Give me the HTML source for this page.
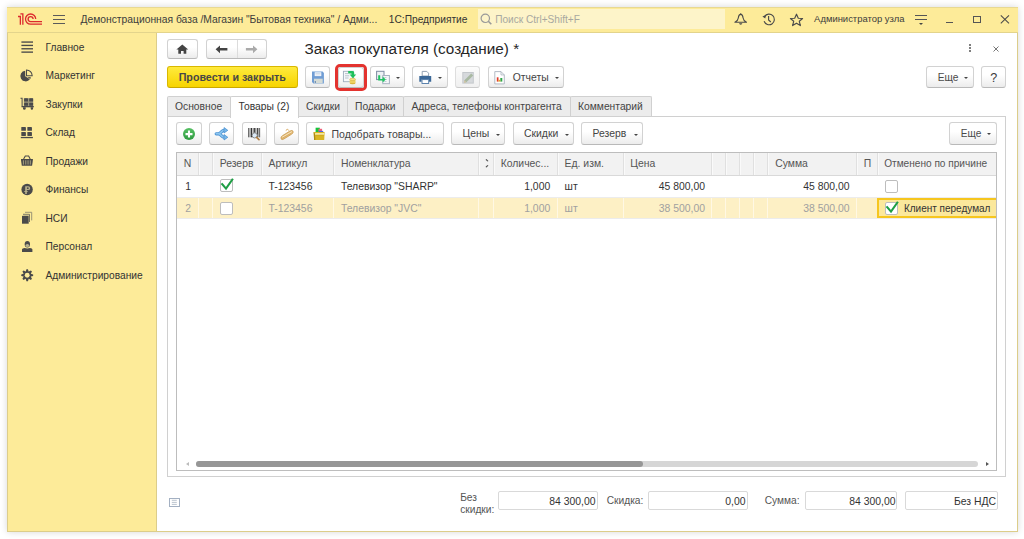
<!DOCTYPE html>
<html><head><meta charset="utf-8">
<style>
*{box-sizing:border-box;margin:0;padding:0}
html,body{width:1024px;height:539px;overflow:hidden;background:#fff;font-family:"Liberation Sans",sans-serif;color:#333}
#win{position:absolute;left:7px;top:7px;width:1011px;height:525px;background:#fff;box-shadow:0 0 7px rgba(0,0,0,0.16);border:1px solid #dccd8a;border-top:none}
#hdr{position:absolute;left:7px;top:7px;width:1011px;height:26px;background:#fdeb99;border-bottom:1px solid #e3d48c;border-top:1px solid #e8d992}
#side{position:absolute;left:7px;top:33px;width:150px;height:499px;background:#fdeb99;border-right:1px solid #dccd8a;border-left:1px solid #dccd8a;border-bottom:1px solid #dccd8a}
.t{position:absolute;white-space:nowrap;color:#333}
.btn{position:absolute;background:linear-gradient(#fff 40%,#ececec);border:1px solid #d2d2d2;border-bottom-color:#b9b9b9;border-radius:3px}
.dd{position:absolute;width:0;height:0;border-left:2px solid transparent;border-right:2px solid transparent;border-top:2px solid #444}
.tab{position:absolute;top:96px;height:20px;background:#ececec;border:1px solid #d0d0d0;border-bottom:none;border-radius:2px 2px 0 0}
.hl{position:absolute;height:1px}
.vl{position:absolute;width:1px}
.cb{position:absolute;width:13px;height:13px;background:#fff;border:1px solid #bdbdbd;border-radius:2px}
.inp{position:absolute;top:491px;height:19px;background:#fff;border:1px solid #d9d9d9;border-radius:2px}
svg{position:absolute;overflow:visible}
</style></head><body>
<div id="win"></div>
<div id="hdr"></div>
<div id="side"></div>

<svg style="left:14px;top:10px" width="32" height="18" viewBox="0 0 32 18">
<g fill="none" stroke="#dc2a2e" stroke-width="1.3">
<path d="M4 6.5 H6.35 V14.7"/>
<path d="M6.35 3.85 H8.85 V14.7"/>
<path d="M21.7 9.1 A5.1 5.1 0 1 0 16.6 14.2 H28"/>
<path d="M19.1 9.1 A2.5 2.5 0 1 0 16.6 11.6 H28"/>
</g></svg>
<div class="hl" style="left:53px;top:15.0px;width:12px;height:1.2px;background:#5a5a5a"></div>
<div class="hl" style="left:53px;top:19.0px;width:12px;height:1.2px;background:#5a5a5a"></div>
<div class="hl" style="left:53px;top:23.0px;width:12px;height:1.2px;background:#5a5a5a"></div>
<div class="t" style="left:80.5px;top:13px;font-size:10.3px;line-height:14px;color:#3c3c3c">Демонстрационная база /Магазин "Бытовая техника" / Адми...</div>
<div class="t" style="left:388.8px;top:13px;font-size:10.2px;line-height:14px;color:#333">1С:Предприятие</div>
<div style="position:absolute;left:478px;top:9px;width:247px;height:20px;background:#fdf4c9"></div>
<svg style="left:480px;top:13px" width="13" height="13" viewBox="0 0 13 13"><g fill="none" stroke="#999" stroke-width="1.2"><circle cx="5.3" cy="5.3" r="4.2"/><path d="M8.3 8.3 L11.3 11.3" stroke-width="1.6"/></g></svg>
<div class="t" style="left:495.2px;top:13px;font-size:10.1px;line-height:14px;color:#a8a8a0">Поиск Ctrl+Shift+F</div>
<svg style="left:734px;top:13px" width="14" height="14" viewBox="0 0 14 14"><path fill="none" stroke="#4a4a4a" stroke-width="1.1" stroke-linejoin="round" d="M6.7 1.4 C4.8 1.4 4.5 3.2 4.3 5 C4.1 7 3.2 8.1 0.9 9.3 H12.5 C10.2 8.1 9.3 7 9.1 5 C8.9 3.2 8.6 1.4 6.7 1.4Z"/><circle cx="6.7" cy="0.9" r="0.75" fill="#4a4a4a"/><path d="M5 10.3 A1.75 1.75 0 0 0 8.4 10.3Z" fill="#4a4a4a"/></svg>
<svg style="left:762px;top:13px" width="14" height="14" viewBox="0 0 14 14"><g fill="none" stroke="#4a4a4a" stroke-width="1.15"><path d="M2.6 3.6 A5.3 5.3 0 1 1 2.1 8.3"/><path d="M6.6 3 V7 L8.8 9"/></g><path d="M0.4 3.4 L3.9 1.9 L3.3 5.4Z" fill="#4a4a4a"/></svg>
<svg style="left:789px;top:12.5px" width="15" height="14" viewBox="0 0 15 14"><path fill="none" stroke="#4a4a4a" stroke-width="1.15" stroke-linejoin="round" d="M7.5 1.2 L9.3 5.2 L13.6 5.5 L10.3 8.3 L11.4 12.6 L7.5 10.2 L3.6 12.6 L4.7 8.3 L1.4 5.5 L5.7 5.2 Z"/></svg>
<div class="t" style="left:814.1px;top:12px;font-size:9.45px;line-height:14px;color:#3c3c3c">Администратор узла</div>
<div class="hl" style="left:915.2px;top:14.8px;width:11.8px;height:1.2px;background:#555"></div>
<div class="hl" style="left:915.2px;top:18.5px;width:11.8px;height:1.2px;background:#555"></div>
<div class="dd" style="left:919px;top:23.2px;border-left-width:2.2px;border-right-width:2.2px;border-top:2.2px solid #444"></div>
<div class="hl" style="left:946px;top:21.6px;width:7px;height:1.1px;background:#555"></div>
<div style="position:absolute;left:973.2px;top:16.2px;width:7.6px;height:6.8px;border:1px solid #555"></div>
<svg style="left:1000px;top:15px" width="10" height="9" viewBox="0 0 10 9"><g stroke="#4a4a4a" stroke-width="1.05"><path d="M0.8 0.3 L9 8.3 M9 0.3 L0.8 8.3"/></g></svg>
<div class="t" style="left:45.5px;top:41px;font-size:10.2px;line-height:14px;color:#333">Главное</div>
<div class="t" style="left:45.5px;top:69px;font-size:10.2px;line-height:14px;color:#333">Маркетинг</div>
<div class="t" style="left:45.5px;top:98px;font-size:10.2px;line-height:14px;color:#333">Закупки</div>
<div class="t" style="left:45.5px;top:126px;font-size:10.2px;line-height:14px;color:#333">Склад</div>
<div class="t" style="left:45.5px;top:155px;font-size:10.2px;line-height:14px;color:#333">Продажи</div>
<div class="t" style="left:45.5px;top:183px;font-size:10.2px;line-height:14px;color:#333">Финансы</div>
<div class="t" style="left:45.5px;top:212px;font-size:10.2px;line-height:14px;color:#333">НСИ</div>
<div class="t" style="left:45.5px;top:240px;font-size:10.2px;line-height:14px;color:#333">Персонал</div>
<div class="t" style="left:45.5px;top:269px;font-size:10.2px;line-height:14px;color:#333">Администрирование</div>
<svg style="left:18px;top:36px" width="20" height="18" viewBox="0 0 20 18"><g fill="#4a4a4a"><rect x="3.4" y="5.4" width="11.6" height="1.35"/><rect x="3.4" y="8.75" width="11.6" height="1.35"/><rect x="3.4" y="12.1" width="11.6" height="1.35"/><rect x="3.4" y="15.45" width="11.6" height="1.35"/></g></svg>
<svg style="left:18px;top:66px" width="20" height="18" viewBox="0 0 20 18"><g fill="#4a4a4a"><path d="M7.2 4.8 A5.3 5.3 0 1 0 11.9 13.3 L7.2 10.3 Z"/><path d="M9.3 11.1 L12.9 11.3 A5.3 5.3 0 0 1 12.2 13.0 Z"/><path d="M8.5 4.0 V9.7 H14.2 A5.7 5.7 0 0 0 8.5 4.0 Z" fill="none" stroke="#4a4a4a" stroke-width="1.05"/></g></svg>
<svg style="left:18px;top:95px" width="20" height="18" viewBox="0 0 20 18"><g fill="#4a4a4a"><path d="M2.5 2.8 H4.6 V11.4 H3.6 V3.8 H2.5Z"/><rect x="5.8" y="3.2" width="9.4" height="7.8" fill="#9b9679"/><rect x="6.1" y="3.3" width="3.9" height="3.2" rx="0.6"/><rect x="11.2" y="3.3" width="3.9" height="3.2" rx="0.6"/><rect x="6.1" y="7.8" width="3.9" height="3.0" rx="0.6"/><rect x="11.2" y="7.8" width="3.9" height="3.0" rx="0.6"/><rect x="3.6" y="11" width="12.2" height="1.3"/><path d="M5 12.2 H7.7 V13.6 A1.35 1.2 0 0 1 5 13.6Z"/><path d="M12.7 12.2 H15.1 V13.6 A1.2 1.2 0 0 1 12.7 13.6Z"/></g></svg>
<svg style="left:18px;top:123px" width="20" height="18" viewBox="0 0 20 18"><g fill="#4a4a4a"><rect x="3.3" y="4" width="4.6" height="3.8" rx="0.4"/><rect x="9.35" y="4" width="4.6" height="3.8" rx="0.4"/><rect x="3.3" y="9" width="4.6" height="3.9" rx="0.4"/><rect x="9.35" y="9" width="4.6" height="3.9" rx="0.4"/><rect x="2.8" y="13.9" width="12.1" height="1.3"/></g></svg>
<svg style="left:18px;top:152px" width="20" height="18" viewBox="0 0 20 18"><g><path d="M3 7 H14.9 V8 L14.1 13.7 H3.8 L3 8 Z" fill="#4a4a4a"/><path d="M5.6 7 L7.3 4 H10.6 L12.2 7" fill="none" stroke="#4a4a4a" stroke-width="1.1"/><g fill="#9d9878"><rect x="4.9" y="8.3" width="1.1" height="4.3"/><rect x="7.2" y="8.3" width="1.1" height="4.3"/><rect x="9.5" y="8.3" width="1.1" height="4.3"/><rect x="11.8" y="8.3" width="1.1" height="4.3"/></g></g></svg>
<svg style="left:18px;top:180px" width="20" height="18" viewBox="0 0 20 18"><g><circle cx="9.1" cy="9.5" r="5.7" fill="#4a4a4a"/><path d="M7.2 6.3 H10.3 A1.9 1.9 0 0 1 10.3 10.1 H8.8 V14 H7.2Z M6.3 11 H9.6 V12 H6.3Z" fill="#b8b18c"/><circle cx="9.8" cy="8.2" r="0.9" fill="#4a4a4a"/></g></svg>
<svg style="left:18px;top:208px" width="20" height="18" viewBox="0 0 20 18"><g><path d="M7 4.3 H13.7 V12.4" fill="none" stroke="#8f8a72" stroke-width="0.9"/><path d="M5 6.3 H11.5 V14" fill="none" stroke="#77735f" stroke-width="1"/><rect x="5.4" y="6.8" width="5.6" height="0.6" fill="#aaa486"/><rect x="4" y="7.85" width="6.7" height="7.85" fill="#4a4a4a"/></g></svg>
<svg style="left:18px;top:237px" width="20" height="18" viewBox="0 0 20 18"><g fill="#4a4a4a"><path d="M6.7 7 A2.65 3 0 0 1 12 7 V7.4 A2.65 3 0 0 1 6.7 7.4Z"/><ellipse cx="9.35" cy="8.5" rx="1.9" ry="1.5" fill="#b9b38e"/><path d="M4 15 V12.6 C4 11.6 5.2 11 6.6 10.9 L9.3 11.6 L12 10.9 C13.4 11 14.4 11.6 14.4 12.6 V15Z"/></g></svg>
<svg style="left:18px;top:265px" width="20" height="18" viewBox="0 0 20 18"><g><path d="M8.42 4.25 L9.98 4.25 L10.61 6.46 L10.85 6.56 L12.86 5.44 L13.96 6.54 L12.84 8.55 L12.94 8.79 L15.15 9.42 L15.15 10.98 L12.94 11.61 L12.84 11.85 L13.96 13.86 L12.86 14.96 L10.85 13.84 L10.61 13.94 L9.98 16.15 L8.42 16.15 L7.79 13.94 L7.55 13.84 L5.54 14.96 L4.44 13.86 L5.56 11.85 L5.46 11.61 L3.25 10.98 L3.25 9.42 L5.46 8.79 L5.56 8.55 L4.44 6.54 L5.54 5.44 L7.55 6.56 L7.79 6.46Z" fill="#4a4a4a"/><circle cx="9.2" cy="10.2" r="2.45" fill="#fdeb99"/></g></svg>
<div class="btn" style="left:167px;top:39px;width:31px;height:20px;"></div>
<svg style="left:176px;top:44px" width="13" height="11" viewBox="0 0 13 11"><path fill="#444" d="M6.3 0.4 L12.2 5.6 H10.3 V9.8 H7.6 V7 H5 V9.8 H2.3 V5.6 H0.4Z"/></svg>
<div class="btn" style="left:206px;top:39px;width:61px;height:20px;"></div>
<div class="vl" style="left:237px;top:40px;height:18px;background:#dcdcdc"></div>
<svg style="left:215px;top:45px" width="13" height="9" viewBox="0 0 13 9"><path fill="#444" d="M0.6 4.3 L5 0.4 V3.1 H12.4 V5.5 H5 V8.2Z"/></svg>
<svg style="left:245px;top:45px" width="13" height="9" viewBox="0 0 13 9"><path fill="#aaa" d="M12.4 4.3 L8 0.4 V3.1 H0.9 V5.5 H8 V8.2Z"/></svg>
<div class="t" style="left:304.5px;top:42px;font-size:15.3px;line-height:14px;color:#262626">Заказ покупателя (создание) *</div>
<div style="position:absolute;left:969.4px;top:44.400000000000006px;width:1.8px;height:1.8px;border-radius:1px;background:#555"></div>
<div style="position:absolute;left:969.4px;top:47.400000000000006px;width:1.8px;height:1.8px;border-radius:1px;background:#555"></div>
<div style="position:absolute;left:969.4px;top:50.400000000000006px;width:1.8px;height:1.8px;border-radius:1px;background:#555"></div>
<svg style="left:992.5px;top:45.5px" width="6" height="6" viewBox="0 0 6 6"><path d="M0.5 0.5 L5.5 5.5 M5.5 0.5 L0.5 5.5" stroke="#707070" stroke-width="0.95"/></svg>
<div style="position:absolute;left:167px;top:66px;width:131px;height:22px;border-radius:3px;background:linear-gradient(#ffea3d,#f7d400);border:1px solid #d9b800;border-bottom-color:#c9a800"></div>
<div class="t" style="left:178.7px;top:70px;font-size:10.7px;line-height:14px;color:#474747;font-weight:bold">Провести и закрыть</div>
<div class="btn" style="left:305px;top:66px;width:25px;height:22px;"></div>
<svg style="left:310px;top:70px" width="15" height="15" viewBox="0 0 15 15"><path d="M2 1.6 H12.6 L13.9 2.9 V13.5 H3.4 L2 12.1 Z" fill="#709dd4"/><rect x="4.7" y="2.3" width="6.6" height="3.8" fill="#fbfcfe"/><path d="M5.4 3.5 H10.6 M5.4 4.9 H10.6" stroke="#b9c8dc" stroke-width="0.6"/><rect x="4" y="8.7" width="8.7" height="4.6" fill="#d5dbd6"/><circle cx="5.3" cy="12" r="0.7" fill="#2f5f9e"/></svg>
<div style="position:absolute;left:335px;top:64px;width:32px;height:27px;border:3px solid #e3332f;border-radius:5px"></div>
<div class="btn" style="left:338px;top:67px;width:26px;height:21px;"></div>
<svg style="left:342px;top:70px" width="16" height="15" viewBox="0 0 16 15"><rect x="1.4" y="1.3" width="10" height="10.4" fill="#f6f8fa" stroke="#9eacbd" stroke-width="0.9"/><path d="M3 3.6 H6.3 M3 5.8 H7.2 M3 8 H6.5" stroke="#a9b4c0" stroke-width="0.8"/><ellipse cx="10.6" cy="13.1" rx="2.9" ry="1.2" fill="#d9b43a"/><rect x="7.7" y="9.3" width="5.8" height="3.8" fill="#ecd060"/><ellipse cx="10.6" cy="9.3" rx="2.9" ry="1.2" fill="#f6e48e" stroke="#cfa83a" stroke-width="0.5"/><path d="M6.2 0.9 H10.4 Q12.2 0.9 12.2 2.7 V4.6 H14.2 L10.9 8.3 L7.6 4.6 H9.5 V3.4 H6.2Z" fill="#1fc05c"/></svg>
<div class="btn" style="left:370px;top:66px;width:35px;height:22px;"></div>
<svg style="left:375px;top:70px" width="16" height="15" viewBox="0 0 16 15"><rect x="1.6" y="1.3" width="7.4" height="8.3" fill="#eef1f5" stroke="#7d8ca2" stroke-width="1"/><rect x="7.8" y="5.5" width="6.6" height="8.2" fill="#f6f7f9" stroke="#a7b2c0" stroke-width="1"/><path d="M9.2 7.5 H11.5 M9.2 9.5 H12 M9.2 11.5 H11.5" stroke="#b0bac5" stroke-width="0.7"/><path d="M3.2 5.2 H5.2 V8.9 H7.6 V6.6 L10.8 9.6 L7.6 12.6 V10.6 H3.2 Z" fill="#1fc462"/></svg>
<div class="dd" style="left:396px;top:77px"></div>
<div class="btn" style="left:412px;top:66px;width:36px;height:22px;"></div>
<svg style="left:417.5px;top:70px" width="15" height="15" viewBox="0 0 15 15"><path d="M4.2 1.4 H8.8 L10.6 3.2 V6 H4.2Z" fill="#fff" stroke="#8797ab" stroke-width="0.9"/><path d="M1.3 6 H13.2 V11.8 H11 V9.6 H3.5 V11.8 H1.3Z" fill="#3b6898"/><rect x="4" y="9.6" width="6.7" height="3.9" fill="#fff" stroke="#4d77a5" stroke-width="0.9"/></svg>
<div class="dd" style="left:437.8px;top:77px"></div>
<div class="btn" style="left:455px;top:66px;width:25px;height:22px;background:linear-gradient(#fcfcfc,#f0f0f0);border-color:#dedede;border-bottom-color:#cbcbcb"></div>
<svg style="left:461px;top:71px" width="14" height="14" viewBox="0 0 14 14"><rect x="1.3" y="1" width="11.5" height="11.6" fill="#c3c7cb"/><rect x="2.3" y="2" width="9.5" height="9.6" fill="#d6d9dc"/><path d="M3 11.8 L3.4 9.3 L10.2 2.5 L12.2 4.5 L5.4 11.3Z" fill="#a9b9a2"/><path d="M3 11.8 L3.4 9.3 L5.4 11.3Z" fill="#d9c6a6"/></svg>
<div class="btn" style="left:488px;top:66px;width:76px;height:22px;"></div>
<svg style="left:494px;top:71px" width="11" height="14" viewBox="0 0 11 14"><path d="M0.8 0.6 H7 L10.3 3.9 V12.9 H0.8Z" fill="#fff" stroke="#aab3bf" stroke-width="0.9"/><path d="M7 0.6 V3.9 H10.3" fill="none" stroke="#aab3bf" stroke-width="0.8"/><rect x="2.8" y="6.3" width="1.7" height="4.3" fill="#e23a2a"/><rect x="6.3" y="7" width="2" height="3.6" fill="#2ea64a"/><rect x="4.5" y="8.8" width="1.8" height="1.8" fill="#e0a830"/></svg>
<div class="t" style="left:512.7px;top:71px;font-size:10.4px;line-height:14px;color:#444">Отчеты</div>
<div class="dd" style="left:555px;top:77px"></div>
<div class="btn" style="left:926px;top:66px;width:48px;height:22px;"></div>
<div class="t" style="left:937.7px;top:71px;font-size:10.2px;line-height:14px;color:#4a4a4a">Еще</div>
<div class="dd" style="left:964px;top:77px"></div>
<div class="btn" style="left:981px;top:66px;width:25px;height:22px;"></div>
<div class="t" style="left:990.2px;top:71px;font-size:12.6px;line-height:14px;color:#3a3a3a">?</div>
<div style="position:absolute;left:167px;top:116px;width:839px;height:361px;border:1px solid #d0d0d0;background:#fff"></div>
<div class="tab" style="left:167px;width:64px"></div>
<div class="t" style="left:175.0px;top:100px;font-size:10.3px;line-height:14px;color:#444">Основное</div>
<div class="tab" style="left:298px;width:50px"></div>
<div class="t" style="left:306.0px;top:100px;font-size:10.3px;line-height:14px;color:#444">Скидки</div>
<div class="tab" style="left:347px;width:57px"></div>
<div class="t" style="left:355.0px;top:100px;font-size:10.3px;line-height:14px;color:#444">Подарки</div>
<div class="tab" style="left:403px;width:168px"></div>
<div class="t" style="left:411.4px;top:100px;font-size:10.3px;line-height:14px;color:#444">Адреса, телефоны контрагента</div>
<div class="tab" style="left:570px;width:82px"></div>
<div class="t" style="left:578.0px;top:100px;font-size:10.3px;line-height:14px;color:#444">Комментарий</div>
<div class="tab" style="left:230px;width:69px;top:95.5px;height:22px;background:#fff;z-index:1"></div>
<div class="t" style="left:238.5px;top:100px;font-size:10.3px;line-height:14px;color:#333;z-index:2">Товары (2)</div>
<div class="btn" style="left:176px;top:122px;width:26px;height:23px;"></div>
<svg style="left:182px;top:127px" width="14" height="14" viewBox="0 0 14 14"><defs><linearGradient id="gp" x1="0" y1="0" x2="0" y2="1"><stop offset="0" stop-color="#56c063"/><stop offset="1" stop-color="#2e9a40"/></linearGradient></defs><circle cx="7" cy="7.1" r="6" fill="url(#gp)"/><path d="M7 3.6 V10.6 M3.5 7.1 H10.5" stroke="#fff" stroke-width="2.1"/></svg>
<div class="btn" style="left:209px;top:122px;width:25px;height:23px;"></div>
<svg style="left:214px;top:127px" width="16" height="15" viewBox="0 0 16 15"><g fill="none" stroke-linecap="round" stroke-linejoin="round"><path d="M2.2 6.8 H4.2 Q6 6.8 7.5 4.8 Q8.6 3.3 10.6 3.3 M4.2 6.8 Q6 6.8 7.5 8.8 Q8.6 10.3 10.6 10.3" stroke="#4d93d3" stroke-width="3.2"/><path d="M2.2 6.8 H4.2 Q6 6.8 7.5 4.8 Q8.6 3.3 10.6 3.3 M4.2 6.8 Q6 6.8 7.5 8.8 Q8.6 10.3 10.6 10.3" stroke="#8cc6f0" stroke-width="1.6"/></g><path d="M10 0.6 L13.8 3.3 L10 6 Z M10 7.6 L13.8 10.3 L10 13 Z" fill="#7dbbea" stroke="#4d93d3" stroke-width="0.8" stroke-linejoin="round"/></svg>
<div class="btn" style="left:242px;top:122px;width:25px;height:23px;"></div>
<svg style="left:248px;top:127px" width="15" height="15" viewBox="0 0 15 15"><g fill="#333"><rect x="0.3" y="1" width="0.9" height="9.3"/><rect x="1.8" y="1" width="0.6" height="9.3"/><rect x="3.0" y="1" width="1.2" height="9.3"/><rect x="4.9" y="1" width="0.6" height="9.3"/><rect x="6.0" y="1" width="0.9" height="9.3"/><rect x="7.5" y="1" width="0.6" height="9.3"/><rect x="8.8" y="1" width="1.1" height="9.3"/><rect x="10.6" y="1" width="0.6" height="9.3"/><rect x="11.4" y="1" width="0.7" height="9.3"/></g><circle cx="6.7" cy="8.4" r="2.6" fill="#dbe9f6" stroke="#8a8a8a" stroke-width="1"/><path d="M8.6 10.3 L11 12.7" stroke="#b07e44" stroke-width="1.7" stroke-linecap="round"/></svg>
<div class="btn" style="left:274px;top:122px;width:25px;height:23px;"></div>
<svg style="left:279px;top:128px" width="16" height="13" viewBox="0 0 16 13"><path d="M3.6 7.6 L11 3 Q13.4 1.7 14.1 3.3 Q14.8 4.9 12.5 6.3 L5 10.9 Q2.7 12.3 2 10.7 Q1.3 9 3.6 7.6Z" fill="#e6bf7c" stroke="#c99a52" stroke-width="0.8"/><path d="M3 9.4 L12.9 3.6" stroke="#f7e4bd" stroke-width="1"/><path d="M2.6 10.6 L12.4 5.2" stroke="#d3a35c" stroke-width="0.7"/><path d="M6.8 2.4 L8.6 1.2 L9.8 2.6" fill="none" stroke="#d9aa60" stroke-width="1"/></svg>
<div class="btn" style="left:306px;top:122px;width:138px;height:23px;"></div>
<svg style="left:312px;top:127px" width="14" height="14" viewBox="0 0 14 14"><rect x="3.6" y="0.7" width="4.2" height="6" fill="#14c43a"/><rect x="6.5" y="1.8" width="3.6" height="4.5" fill="#f0607a"/><rect x="6.9" y="3.9" width="4.3" height="2.4" fill="#4a64e0"/><path d="M1.6 5 L12.6 5 L12.2 13 H2.1Z" fill="#d9b524"/><path d="M2.4 6 H12 V7.8 H2.4Z" fill="#f4e7a0"/><path d="M1.6 5 L2.1 13 H3.4 L2.9 6.5Z" fill="#a88818"/><path d="M3.4 8.4 H12.2" stroke="#c9a41a" stroke-width="0.6"/></svg>
<div class="t" style="left:331.5px;top:127px;font-size:10.5px;line-height:14px;color:#444">Подобрать товары...</div>
<div class="btn" style="left:451px;top:122px;width:54px;height:23px;"></div>
<div class="t" style="left:462.5px;top:127px;font-size:10.4px;line-height:14px;color:#444">Цены</div>
<div class="dd" style="left:495.5px;top:133.5px"></div>
<div class="btn" style="left:513px;top:122px;width:61px;height:23px;"></div>
<div class="t" style="left:524.0px;top:127px;font-size:10.4px;line-height:14px;color:#444">Скидки</div>
<div class="dd" style="left:564.5px;top:133.5px"></div>
<div class="btn" style="left:581px;top:122px;width:62px;height:23px;"></div>
<div class="t" style="left:592.5px;top:127px;font-size:10.4px;line-height:14px;color:#444">Резерв</div>
<div class="dd" style="left:633.5px;top:133.5px"></div>
<div class="btn" style="left:949px;top:122px;width:48px;height:23px;"></div>
<div class="t" style="left:960.8px;top:127px;font-size:10.1px;line-height:14px;color:#4a4a4a">Еще</div>
<div class="dd" style="left:987px;top:133px"></div>
<div style="position:absolute;left:176px;top:152px;width:821px;height:319px;border:1px solid #bdbdbd;background:#fff"></div>
<div style="position:absolute;left:177px;top:153px;width:819px;height:23px;background:#f2f2f2;border-bottom:1px solid #d9d9d9"></div>
<div class="vl" style="left:198px;top:153px;height:22px;background:#e0e0e0"></div>
<div class="vl" style="left:199px;top:153px;height:22px;background:#fafafa"></div>
<div class="vl" style="left:212px;top:153px;height:22px;background:#e0e0e0"></div>
<div class="vl" style="left:213px;top:153px;height:22px;background:#fafafa"></div>
<div class="vl" style="left:261px;top:153px;height:22px;background:#e0e0e0"></div>
<div class="vl" style="left:262px;top:153px;height:22px;background:#fafafa"></div>
<div class="vl" style="left:333px;top:153px;height:22px;background:#e0e0e0"></div>
<div class="vl" style="left:334px;top:153px;height:22px;background:#fafafa"></div>
<div class="vl" style="left:478px;top:153px;height:22px;background:#e0e0e0"></div>
<div class="vl" style="left:479px;top:153px;height:22px;background:#fafafa"></div>
<div class="vl" style="left:493px;top:153px;height:22px;background:#e0e0e0"></div>
<div class="vl" style="left:494px;top:153px;height:22px;background:#fafafa"></div>
<div class="vl" style="left:557px;top:153px;height:22px;background:#e0e0e0"></div>
<div class="vl" style="left:558px;top:153px;height:22px;background:#fafafa"></div>
<div class="vl" style="left:623px;top:153px;height:22px;background:#e0e0e0"></div>
<div class="vl" style="left:624px;top:153px;height:22px;background:#fafafa"></div>
<div class="vl" style="left:711px;top:153px;height:22px;background:#e0e0e0"></div>
<div class="vl" style="left:712px;top:153px;height:22px;background:#fafafa"></div>
<div class="vl" style="left:725px;top:153px;height:22px;background:#e0e0e0"></div>
<div class="vl" style="left:726px;top:153px;height:22px;background:#fafafa"></div>
<div class="vl" style="left:739px;top:153px;height:22px;background:#e0e0e0"></div>
<div class="vl" style="left:740px;top:153px;height:22px;background:#fafafa"></div>
<div class="vl" style="left:753px;top:153px;height:22px;background:#e0e0e0"></div>
<div class="vl" style="left:754px;top:153px;height:22px;background:#fafafa"></div>
<div class="vl" style="left:767px;top:153px;height:22px;background:#e0e0e0"></div>
<div class="vl" style="left:768px;top:153px;height:22px;background:#fafafa"></div>
<div class="vl" style="left:856px;top:153px;height:22px;background:#e0e0e0"></div>
<div class="vl" style="left:857px;top:153px;height:22px;background:#fafafa"></div>
<div class="vl" style="left:877px;top:153px;height:22px;background:#e0e0e0"></div>
<div class="vl" style="left:878px;top:153px;height:22px;background:#fafafa"></div>
<div class="hl" style="left:177px;top:197px;width:819px;background:#ececec"></div>
<div style="position:absolute;left:177px;top:198px;width:819px;height:20px;background:#fdf0c5"></div>
<div class="hl" style="left:177px;top:218px;width:819px;background:#ececec"></div>
<div class="vl" style="left:198px;top:198px;height:20px;background:#fff8e4"></div>
<div class="vl" style="left:212px;top:198px;height:20px;background:#fff8e4"></div>
<div class="vl" style="left:261px;top:198px;height:20px;background:#fff8e4"></div>
<div class="vl" style="left:333px;top:198px;height:20px;background:#fff8e4"></div>
<div class="vl" style="left:478px;top:198px;height:20px;background:#fff8e4"></div>
<div class="vl" style="left:493px;top:198px;height:20px;background:#fff8e4"></div>
<div class="vl" style="left:557px;top:198px;height:20px;background:#fff8e4"></div>
<div class="vl" style="left:623px;top:198px;height:20px;background:#fff8e4"></div>
<div class="vl" style="left:711px;top:198px;height:20px;background:#fff8e4"></div>
<div class="vl" style="left:725px;top:198px;height:20px;background:#fff8e4"></div>
<div class="vl" style="left:739px;top:198px;height:20px;background:#fff8e4"></div>
<div class="vl" style="left:753px;top:198px;height:20px;background:#fff8e4"></div>
<div class="vl" style="left:767px;top:198px;height:20px;background:#fff8e4"></div>
<div class="vl" style="left:856px;top:198px;height:20px;background:#fff8e4"></div>
<div class="vl" style="left:877px;top:198px;height:20px;background:#fff8e4"></div>
<div class="t" style="left:183.7px;top:157px;font-size:10.4px;line-height:14px;color:#555">N</div>
<div class="t" style="left:219.7px;top:157px;font-size:10.4px;line-height:14px;color:#555">Резерв</div>
<div class="t" style="left:268.5px;top:157px;font-size:10.4px;line-height:14px;color:#555">Артикул</div>
<div class="t" style="left:340.9px;top:157px;font-size:10.4px;line-height:14px;color:#555">Номенклатура</div>
<svg style="left:484px;top:157px" width="6" height="12" viewBox="0 0 6 12"><path d="M2.3 2.7 L3.7 3.9 M3.7 8.6 L2.3 9.8" stroke="#555" stroke-width="1.15" stroke-linecap="round"/></svg>
<div class="t" style="left:500.7px;top:157px;font-size:10.4px;line-height:14px;color:#555">Количес...</div>
<div class="t" style="left:564.6px;top:157px;font-size:10.4px;line-height:14px;color:#555">Ед. изм.</div>
<div class="t" style="left:630.3px;top:157px;font-size:10.4px;line-height:14px;color:#555">Цена</div>
<div class="t" style="left:775.2px;top:157px;font-size:10.4px;line-height:14px;color:#555">Сумма</div>
<div class="t" style="left:863.8px;top:157px;font-size:10.4px;line-height:14px;color:#555">П</div>
<div class="t" style="left:884.2px;top:157px;font-size:10.1px;line-height:14px;color:#555">Отменено по причине</div>
<div class="t" style="right:833.0px;top:180px;font-size:10.4px;line-height:14px;color:#333">1</div>
<div class="cb" style="left:220px;top:179px"></div>
<svg style="left:220px;top:176px" width="16" height="16" viewBox="0 0 16 16"><path d="M2.2 8.2 L6 12.6 L12.3 3.6" fill="none" stroke="#1e9e45" stroke-width="2.1" stroke-linecap="square"/></svg>
<div class="t" style="left:268.5px;top:180px;font-size:10.4px;line-height:14px;color:#333">T-123456</div>
<div class="t" style="left:340.9px;top:180px;font-size:10.4px;line-height:14px;color:#333">Телевизор "SHARP"</div>
<div class="t" style="right:473.8px;top:180px;font-size:10.4px;line-height:14px;color:#333">1,000</div>
<div class="t" style="left:564.6px;top:180px;font-size:10.4px;line-height:14px;color:#333">шт</div>
<div class="t" style="right:319.0px;top:180px;font-size:10.4px;line-height:14px;color:#333">45 800,00</div>
<div class="t" style="right:174.5px;top:180px;font-size:10.4px;line-height:14px;color:#333">45 800,00</div>
<div class="cb" style="left:884.5px;top:180px"></div>
<div class="t" style="right:833.0px;top:202px;font-size:10.4px;line-height:14px;color:#a0a0a0">2</div>
<div class="cb" style="left:220px;top:201.5px"></div>
<div class="t" style="left:268.5px;top:202px;font-size:10.4px;line-height:14px;color:#a0a0a0">T-123456</div>
<div class="t" style="left:340.9px;top:202px;font-size:10.4px;line-height:14px;color:#a0a0a0">Телевизор "JVC"</div>
<div class="t" style="right:473.8px;top:202px;font-size:10.4px;line-height:14px;color:#a0a0a0">1,000</div>
<div class="t" style="left:564.6px;top:202px;font-size:10.4px;line-height:14px;color:#a0a0a0">шт</div>
<div class="t" style="right:319.0px;top:202px;font-size:10.4px;line-height:14px;color:#a0a0a0">38 500,00</div>
<div class="t" style="right:174.5px;top:202px;font-size:10.4px;line-height:14px;color:#a0a0a0">38 500,00</div>
<div style="position:absolute;left:877px;top:198px;width:119px;height:20px;background:#fbe89c;border:2px solid #f6c61e;border-right:none"></div>
<div class="cb" style="left:884.5px;top:201.5px"></div>
<svg style="left:884.5px;top:198.5px" width="16" height="16" viewBox="0 0 16 16"><path d="M2.2 8.2 L6 12.6 L12.3 3.6" fill="none" stroke="#1e9e45" stroke-width="2.1" stroke-linecap="square"/></svg>
<div class="t" style="left:903.9px;top:202px;font-size:10.0px;line-height:14px;color:#333">Клиент передумал</div>
<div style="position:absolute;left:195.5px;top:461px;width:782px;height:6px;border-radius:3px;background:#d6d6d6"></div>
<div style="position:absolute;left:195.5px;top:461px;width:447px;height:6px;border-radius:3px;background:#969696"></div>
<div style="position:absolute;left:185.5px;top:462px;width:0;height:0;border-top:2px solid transparent;border-bottom:2px solid transparent;border-right:3px solid #bbb"></div>
<div style="position:absolute;left:985.5px;top:462px;width:0;height:0;border-top:2px solid transparent;border-bottom:2px solid transparent;border-left:3.5px solid #555"></div>
<svg style="left:169px;top:498px" width="11" height="9" viewBox="0 0 11 9"><rect x="0.5" y="0.5" width="10" height="8" fill="#fff" stroke="#a3b0c2" stroke-width="1"/><path d="M2.8 2.3 H7.8 M2.8 4.4 H7.8 M2.8 6.4 H7.8" stroke="#b4bdc9" stroke-width="0.9"/></svg>
<div class="t" style="left:460.2px;top:491px;font-size:10.2px;line-height:14px;color:#555">Без</div>
<div class="t" style="left:460.2px;top:503px;font-size:10.2px;line-height:14px;color:#555">скидки:</div>
<div class="inp" style="left:497.5px;width:100px"></div>
<div class="t" style="right:428.5px;top:495px;font-size:10.4px;line-height:14px;color:#333">84 300,00</div>
<div class="t" style="left:606.7px;top:494px;font-size:10.2px;line-height:14px;color:#555">Скидка:</div>
<div class="inp" style="left:647.5px;width:100px"></div>
<div class="t" style="right:278.5px;top:495px;font-size:10.4px;line-height:14px;color:#333">0,00</div>
<div class="t" style="left:764.7px;top:494px;font-size:10.2px;line-height:14px;color:#555">Сумма:</div>
<div class="inp" style="left:805px;width:92px"></div>
<div class="t" style="right:128.5px;top:495px;font-size:10.4px;line-height:14px;color:#333">84 300,00</div>
<div class="inp" style="left:905px;width:93px"></div>
<div class="t" style="right:28.0px;top:495px;font-size:10.4px;line-height:14px;color:#333">Без НДС</div>
</body></html>
